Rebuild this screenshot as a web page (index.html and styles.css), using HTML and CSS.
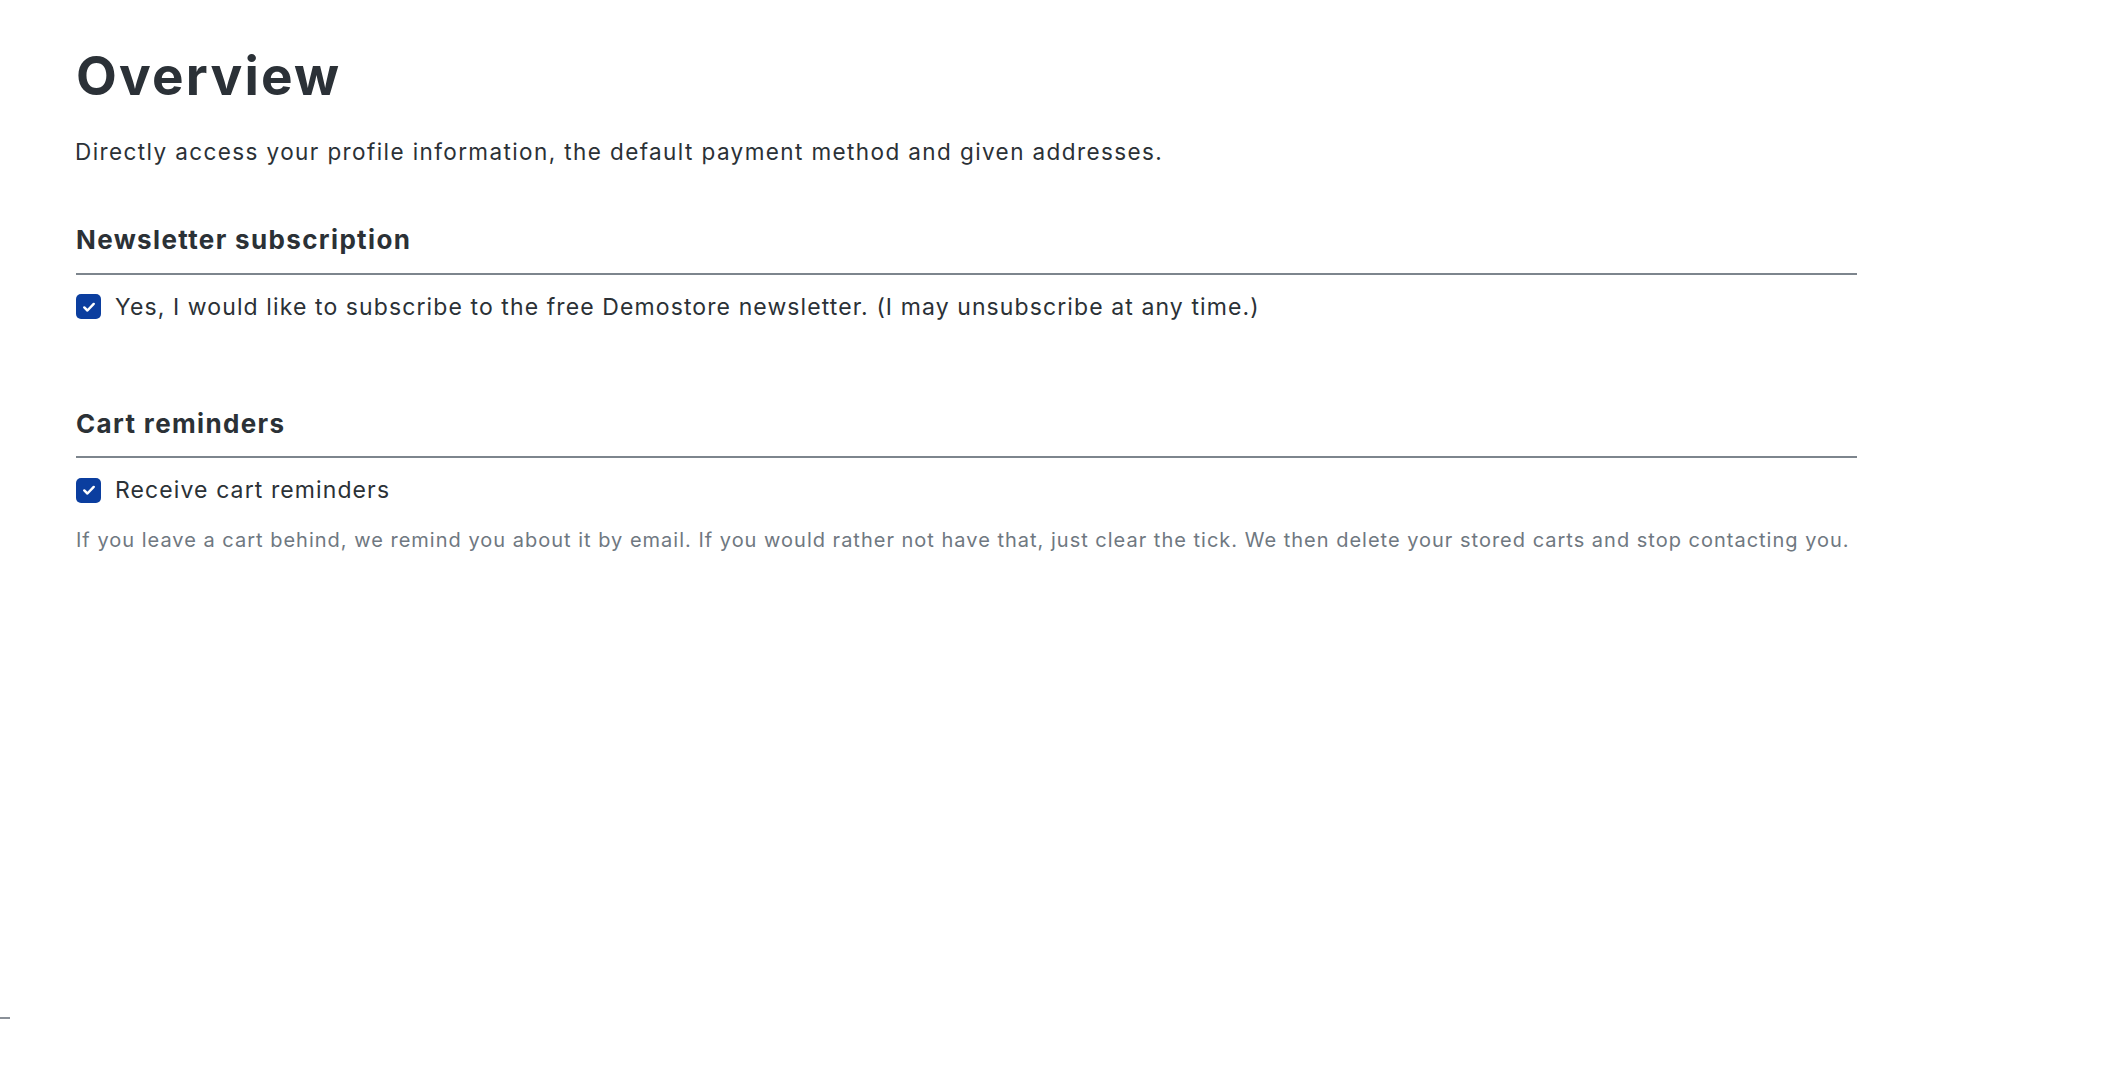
FILE: index.html
```html
<!DOCTYPE html>
<html lang="en">
<head>
<meta charset="utf-8">
<title>Overview</title>
<link rel="stylesheet" href="styles.css">
</head>
<body>
<div class="page">
  <main class="account">
    <h1 class="title">Overview</h1>
    <p class="welcome">Directly access your profile information, the default payment method and given addresses.</p>

    <section class="card card-newsletter">
      <h2 class="card-title">Newsletter subscription</h2>
      <label class="check">
        <span class="box"><svg viewBox="0 0 16 16" width="18" height="18"><path d="M3.8 8.4L6.6 11.1L12.2 5.3" fill="none" stroke="#fff" stroke-width="2.2" stroke-linecap="round" stroke-linejoin="round"/></svg></span>
        <span class="check-label">Yes, I would like to subscribe to the free Demostore newsletter. (I may unsubscribe at any time.)</span>
      </label>
    </section>

    <section class="card card-cart">
      <h2 class="card-title">Cart reminders</h2>
      <label class="check">
        <span class="box"><svg viewBox="0 0 16 16" width="18" height="18"><path d="M3.8 8.4L6.6 11.1L12.2 5.3" fill="none" stroke="#fff" stroke-width="2.2" stroke-linecap="round" stroke-linejoin="round"/></svg></span>
        <span class="check-label">Receive cart reminders</span>
      </label>
      <p class="help">If you leave a cart behind, we remind you about it by email. If you would rather not have that, just clear the tick. We then delete your stored carts and stop contacting you.</p>
    </section>
  </main>
  <div class="foot-dash"></div>
</div>
</body>
</html>
```

FILE: styles.css
```css
html, body {
  margin: 0;
  padding: 0;
  background: #ffffff;
}

body {
  font-family: Inter, "Noto Sans", "Liberation Sans", sans-serif;
  color: #2b3136;
}

.page {
  min-height: 100vh;
  display: flex;
  flex-direction: column;
}

.account {
  padding: 45px 0 0 76px;
  width: 1781px;
}

.title {
  margin: 0;
  font-size: 53px;
  line-height: 1.2;
  font-weight: 700;
  color: #2b3137;
  letter-spacing: 2.2px;
}

.welcome {
  margin: 26px 0 0 -1px;
  font-size: 22.5px;
  line-height: 1.5;
  color: #2b3136;
  letter-spacing: 1.4px;
}

.card {
  display: flex;
  flex-direction: column;
}

.card-newsletter {
  margin-top: 56px;
}

.card-cart {
  margin-top: 84px;
}

.card-title {
  margin: 0;
  font-size: 26px;
  line-height: 1.2;
  font-weight: 700;
  color: #2b3136;
  letter-spacing: 1.35px;
  padding-bottom: 17px;
  border-bottom: 2px solid #7d858d;
}

.check {
  margin-top: 15px;
  display: flex;
  align-items: center;
  gap: 14px;
  font-size: 23px;
  line-height: 1.5;
  color: #2b3136;
  letter-spacing: 1.1px;
}

.box {
  width: 25px;
  height: 25px;
  flex: none;
  border-radius: 5px;
  background: #0b3e9f;
  display: flex;
  align-items: center;
  justify-content: center;
}

.help {
  margin: 17px 0 0;
  font-size: 20px;
  line-height: 1.5;
  color: #6f7881;
  letter-spacing: 1px;
}

.foot-dash {
  margin-top: auto;
  margin-bottom: 61px;
  width: 10px;
  height: 2px;
  background: #8a9098;
}
```
